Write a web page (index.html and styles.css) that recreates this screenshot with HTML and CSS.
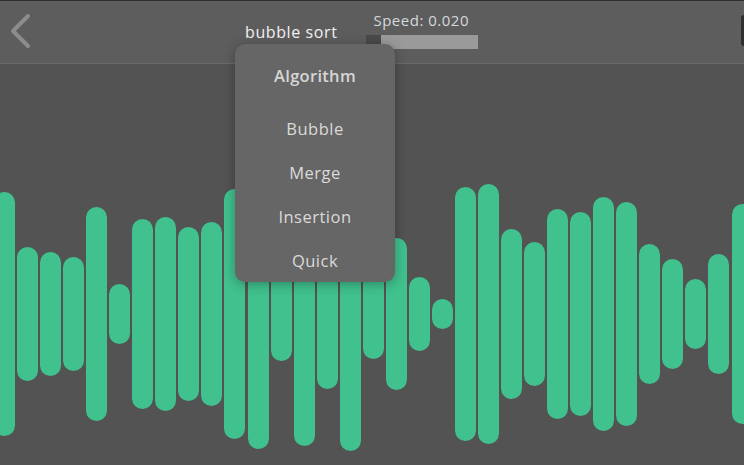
FILE: index.html
```html
<!DOCTYPE html>
<html>
<head>
<meta charset="utf-8">
<link rel="stylesheet" href="styles.css">
</head>
<body>
<div class="app">
  <header class="topbar">
    <button class="back" aria-label="Back">
      <svg width="24" height="36" viewBox="0 0 24 36"><polyline points="18,3 3,18 18,33" fill="none" stroke="#8c8c8c" stroke-width="4" stroke-linecap="round" stroke-linejoin="round"/></svg>
    </button>
    <div class="title">bubble sort</div>
    <div class="speed">
      <div class="speed-label">Speed: 0.020</div>
      <div class="slider"><span class="thumb"></span><span class="track"></span></div>
    </div>
    <div class="edge-btn"></div>
  </header>
  <div class="menu">
    <div class="menu-head">Algorithm</div>
    <div class="menu-item">Bubble</div>
    <div class="menu-item">Merge</div>
    <div class="menu-item">Insertion</div>
    <div class="menu-item">Quick</div>
  </div>
  <main class="bars">
    <div class="bar" style="height:244px"></div>
    <div class="bar" style="height:134px"></div>
    <div class="bar" style="height:124px"></div>
    <div class="bar" style="height:114px"></div>
    <div class="bar" style="height:214px"></div>
    <div class="bar" style="height:60px"></div>
    <div class="bar" style="height:190px"></div>
    <div class="bar" style="height:194px"></div>
    <div class="bar" style="height:174px"></div>
    <div class="bar" style="height:184px"></div>
    <div class="bar" style="height:250px"></div>
    <div class="bar" style="height:270px"></div>
    <div class="bar" style="height:94px"></div>
    <div class="bar" style="height:264px"></div>
    <div class="bar" style="height:150px"></div>
    <div class="bar" style="height:274px"></div>
    <div class="bar" style="height:90px"></div>
    <div class="bar" style="height:152px"></div>
    <div class="bar" style="height:74px"></div>
    <div class="bar" style="height:30px"></div>
    <div class="bar" style="height:254px"></div>
    <div class="bar" style="height:260px"></div>
    <div class="bar" style="height:170px"></div>
    <div class="bar" style="height:144px"></div>
    <div class="bar" style="height:210px"></div>
    <div class="bar" style="height:204px"></div>
    <div class="bar" style="height:234px"></div>
    <div class="bar" style="height:224px"></div>
    <div class="bar" style="height:140px"></div>
    <div class="bar" style="height:110px"></div>
    <div class="bar" style="height:70px"></div>
    <div class="bar" style="height:120px"></div>
    <div class="bar" style="height:220px"></div>
  </main>
</div>
</body>
</html>
```
FILE: styles.css
```css
html, body {
  margin: 0;
  padding: 0;
  width: 744px;
  height: 465px;
  overflow: hidden;
  background: #535353;
  font-family: "Open Sans", "Noto Sans", sans-serif;
}
.app {
  position: relative;
  width: 744px;
  height: 465px;
  overflow: hidden;
}
.topbar {
  display: flex;
  align-items: flex-start;
  height: 62px;
  background: #5d5d5d;
  border-top: 1px solid #2e2e2e;
  border-bottom: 1px solid #6b6b6b;
  position: relative;
}
.back {
  margin: 12px 0 0 10px;
  padding: 0;
  border: none;
  background: none;
  width: 24px;
  height: 36px;
  display: block;
}
.back svg { display: block; }
.title {
  margin: 20px 0 0 211px;
  color: #f2f2f2;
  font-size: 16px;
  line-height: 22px;
  letter-spacing: 0.6px;
}
.speed {
  margin: 9px 0 0 29px;
  display: flex;
  flex-direction: column;
}
.speed-label {
  margin-left: 7px;
  color: #d4d8dc;
  font-size: 15px;
  line-height: 20px;
  letter-spacing: 0.5px;
}
.slider {
  display: flex;
  margin-top: 5px;
  height: 14px;
}
.thumb {
  width: 15px;
  background: #4a4a4a;
}
.track {
  width: 97px;
  background: #9a9a9a;
}
.edge-btn {
  position: absolute;
  left: 741px;
  top: 14px;
  width: 10px;
  height: 31px;
  background: #2f2f2f;
  border-radius: 3px;
}
.bars {
  display: flex;
  align-items: center;
  height: 500px;
  margin-left: -6px;
  gap: 2.06px;
}
.bar {
  flex: none;
  width: 21px;
  background: #40c18d;
  border-radius: 11px;
}
.menu {
  position: absolute;
  left: 235px;
  top: 44px;
  width: 160px;
  height: 238px;
  background: #666666;
  border-radius: 10px;
  box-shadow: 0 2px 12px rgba(0, 0, 0, 0.3);
  z-index: 5;
  display: flex;
  flex-direction: column;
  align-items: center;
  color: #dadada;
  font-size: 16.5px;
  letter-spacing: 0.5px;
}
.menu-head {
  margin-top: 20px;
  height: 24px;
  line-height: 24px;
  font-weight: 600;
  letter-spacing: 0.3px;
  color: #d6d6d6;
}
.menu-item {
  height: 44px;
  line-height: 44px;
}
.menu-head + .menu-item { margin-top: 19px; }
```
